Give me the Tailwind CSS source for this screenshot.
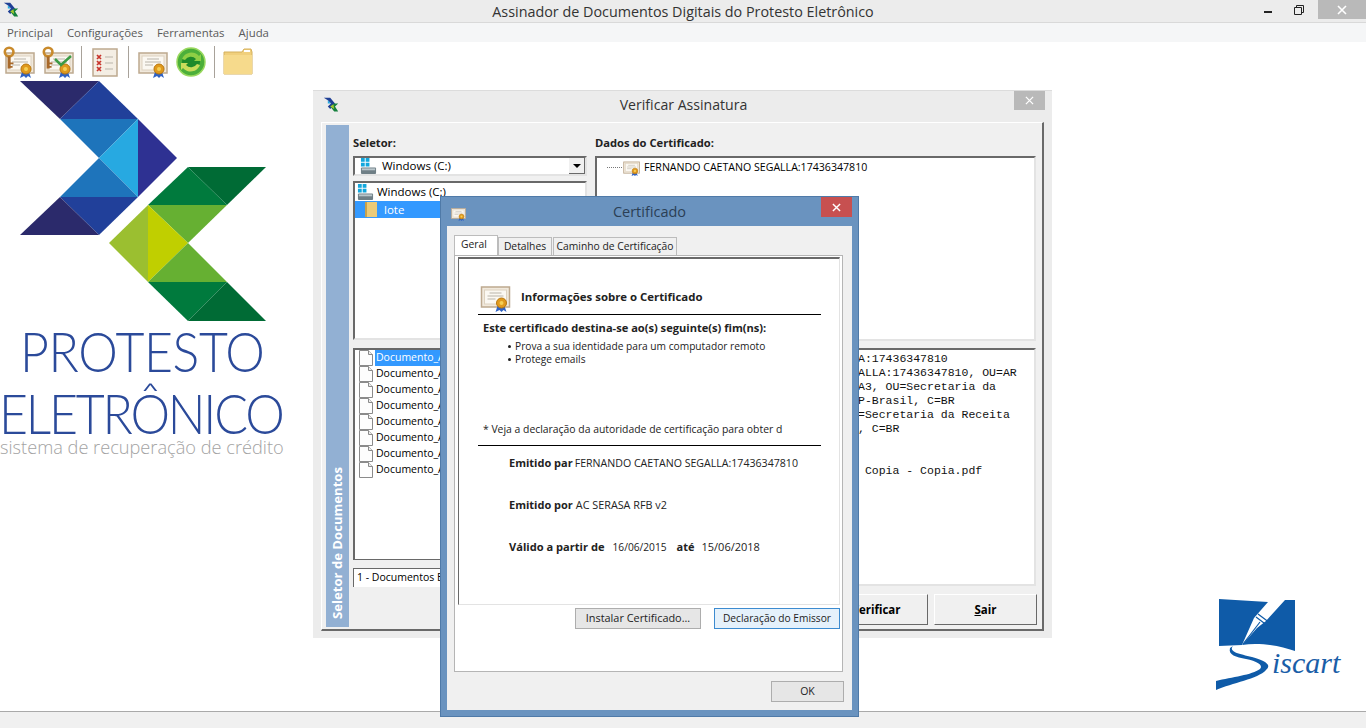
<!DOCTYPE html>
<html lang="pt-BR">
  <head>
    <meta charset="UTF-8" />
    <title>Assinador de Documentos Digitais do Protesto Eletrônico</title>
    <script src="https://cdn.jsdelivr.net/npm/@tailwindcss/browser@4"></script>
  </head>
  <body class="bg-white overflow-hidden font-['Open_Sans','Noto_Sans',sans-serif]">
    <svg class="hidden">
      <symbol id="mark" viewBox="0 0 20 20">
        <polygon points="1,1 9,1 15,8 9,15 6,12 10,8 6,4" fill="#1f3f95" />
        <polygon points="6,4 10,8 6,8" fill="#27a9e1" />
        <polygon points="9,12 14,8 19,8 15,12 19,18 14,18" fill="#15803d" />
        <polygon points="9,12 13,9 14,15" fill="#a3c52f" />
      </symbol>
      <symbol id="cert" viewBox="0 0 32 32">
        <rect x="3" y="7" width="28" height="20" fill="#f1e9dc" stroke="#bda98f" stroke-width="1.5" />
        <rect x="6" y="10" width="22" height="14" fill="#fbf8f2" stroke="#ddd2c0" />
        <path d="M11 13h12M9 16h16M9 19h8" stroke="#b9b4aa" />
        <path d="M19 26l-2 6 4-2 2 2 2-2 3 2-2-6z" fill="#2f62c4" />
        <circle cx="23" cy="23" r="5" fill="#e09a1e" stroke="#b9770f" />
        <circle cx="23" cy="23" r="2" fill="#f6cf55" />
      </symbol>
      <symbol id="key" viewBox="0 0 16 30">
        <circle cx="7" cy="7" r="5" fill="none" stroke="#c98a2b" stroke-width="3" />
        <path d="M7 12v14" stroke="#a8692a" stroke-width="3.5" />
        <path d="M8 20h4M8 24h3" stroke="#a8692a" stroke-width="2" />
      </symbol>
      <symbol id="drive" viewBox="0 0 18 18">
        <rect x="1" y="0" width="4" height="4" fill="#12a7dd" />
        <rect x="6" y="0" width="4" height="4" fill="#12a7dd" />
        <rect x="1" y="5" width="4" height="4" fill="#12a7dd" />
        <rect x="6" y="5" width="4" height="4" fill="#12a7dd" />
        <rect x="1" y="10" width="16" height="7" rx="1" fill="#6f7f86" />
        <rect x="2" y="11" width="14" height="2" fill="#b9c6cb" />
      </symbol>
      <symbol id="doc" viewBox="0 0 14 16">
        <path d="M.5.5h9l4 4v11H.5z" fill="#fdfdfd" stroke="#8a8a8a" />
        <path d="M9.5.5v4h4" fill="#ececec" stroke="#8a8a8a" />
      </symbol>
    </svg>

    <div class="relative w-[1366px] h-[728px] flex flex-col">
      <header class="h-[23px] shrink-0 bg-[#ececec] border-b border-[#d9d9d9] flex items-center relative">
        <svg class="absolute left-[3px] top-[2px] w-[16px] h-[16px]"><use href="#mark" /></svg>
        <h1 class="flex-1 text-center text-[14.35px] text-[#333] leading-[23px]">Assinador de Documentos Digitais do Protesto Eletrônico</h1>
        <div class="absolute right-0 top-0 flex items-center h-[19px]">
          <svg class="w-[10px] h-[10px] mr-[21px]" viewBox="0 0 10 10"><path d="M1 7h8" stroke="#222" stroke-width="2" /></svg>
          <svg class="w-[10px] h-[10px] mr-[14px]" viewBox="0 0 10 10"><path d="M.5 2.5h7v7h-7zM2.5 2.5v-2h7v7h-2" fill="none" stroke="#222" /></svg>
          <div class="w-[48px] h-[19px] bg-[#b9b9b9] flex items-center justify-center">
            <svg class="w-[10px] h-[10px]" viewBox="0 0 10 10"><path d="M1 1l8 8M9 1l-8 8" stroke="#fff" stroke-width="1.6" /></svg>
          </div>
        </div>
      </header>

      <nav class="h-[19px] shrink-0 bg-[#f5f6f7] flex items-center gap-[14px] pl-[7px] text-[11.4px] text-[#5a5a5a]">
        <span>Principal</span><span>Configurações</span><span>Ferramentas</span><span>Ajuda</span>
      </nav>

      <div class="h-[38px] shrink-0 flex items-center pl-[3px] pt-[2px]">
        <div class="relative w-[32px] h-[32px]"><svg class="w-[32px] h-[32px]"><use href="#cert" /></svg><svg class="absolute left-0 top-0 w-[14px] h-[26px]"><use href="#key" /></svg></div>
        <div class="relative w-[32px] h-[32px] ml-[7px]"><svg class="w-[32px] h-[32px]"><use href="#cert" /></svg><svg class="absolute left-0 top-0 w-[14px] h-[26px]"><use href="#key" /></svg><svg class="absolute left-0 top-0 w-[32px] h-[32px]" viewBox="0 0 32 32"><path d="M13 13l6 6 10-9" fill="none" stroke="#3c9b45" stroke-width="2.5" /></svg></div>
        <div class="w-px h-[32px] bg-[#a8a29a] ml-[7px]"></div>
        <svg class="w-[30px] h-[32px] ml-[8px]" viewBox="0 0 30 32"><rect x="3" y="3" width="24" height="27" fill="#f4eee4" stroke="#bda98f" stroke-width="1.5" /><path d="M7 9l4 4M11 9l-4 4M7 15l4 4M11 15l-4 4M7 21l4 4M11 21l-4 4" stroke="#c8352c" stroke-width="1.7" /><path d="M15 11h8M15 17h8M15 23h8" stroke="#b9b4aa" /></svg>
        <div class="w-px h-[32px] bg-[#a8a29a] ml-[8px]"></div>
        <svg class="w-[32px] h-[32px] ml-[7px]"><use href="#cert" /></svg>
        <svg class="w-[32px] h-[32px] ml-[7px]" viewBox="0 0 32 32"><circle cx="16" cy="16" r="14" fill="#4caf3a" stroke="#9ad85f" stroke-width="1.5" /><circle cx="16" cy="16" r="9" fill="#1f8a2a" /><path d="M7 13a10 10 0 0 1 17-3l2-2v7h-7l2-2a7 7 0 0 0-11 1z" fill="#8fcf45" /><path d="M25 19a10 10 0 0 1-17 3l-2 2v-7h7l-2 2a7 7 0 0 0 11-1z" fill="#c9dc5a" /></svg>
        <div class="w-px h-[32px] bg-[#a8a29a] ml-[7px]"></div>
        <svg class="w-[32px] h-[32px] ml-[7px]" viewBox="0 0 32 32"><path d="M2 6h18l2-3h7l1 3v22H2z" fill="#f0cf7c" stroke="#d4b05c" /><rect x="22" y="4" width="6" height="2" fill="#fff" /><path d="M2 9h28v19H2z" fill="#f6da8c" /></svg>
      </div>

      <main class="flex-1"></main>

      <footer class="h-[17px] shrink-0 bg-[#f0f0f0] border-t border-[#a9a9a9]"></footer>

      <!-- logo protesto -->
      <svg class="absolute left-0 top-[80px] w-[280px] h-[245px]" viewBox="0 80 280 245">
        <polygon points="20,81 99,81 60,119" fill="#2b2a6b" />
        <polygon points="99,81 138,119 60,119" fill="#21409a" />
        <polygon points="60,119 138,119 99,158" fill="#1e74bb" />
        <polygon points="138,119 138,197 99,158" fill="#27a9e1" />
        <polygon points="138,119 177,158 138,197" fill="#2e3192" />
        <polygon points="99,158 138,197 60,197" fill="#1e74bb" />
        <polygon points="60,197 138,197 99,235" fill="#21409a" />
        <polygon points="60,197 99,235 20,235" fill="#2b2a6b" />
        <polygon points="188,167 266,167 227,205" fill="#006b35" />
        <polygon points="188,167 227,205 148,205" fill="#007a3d" />
        <polygon points="148,205 227,205 188,243" fill="#66b032" />
        <polygon points="148,205 188,243 148,282" fill="#c0cf00" />
        <polygon points="148,205 148,282 109,243" fill="#9bbf30" />
        <polygon points="188,243 227,282 148,282" fill="#66b032" />
        <polygon points="148,282 227,282 188,321" fill="#007a3d" />
        <polygon points="227,282 266,321 188,321" fill="#006b35" />
      </svg>
      <div class="absolute left-[20px] top-[331px] text-[50px] leading-[40px] font-['Lato'] font-light text-[#2b4a9a] tracking-[-.4px] scale-y-110 whitespace-nowrap">PROTESTO</div>
      <div class="absolute left-[-1px] top-[393px] text-[50px] leading-[40px] font-['Lato'] font-light text-[#2b4a9a] tracking-[-2.2px] scale-y-110 whitespace-nowrap">ELETRÔNICO</div>
      <div class="absolute left-0 top-[437px] text-[18.2px] leading-[20px] font-light text-[#a3a3a3] whitespace-nowrap">sistema de recuperação de crédito</div>

      <!-- logo siscart -->
      <svg class="absolute left-[1210px] top-[595px] w-[90px] h-[100px]" viewBox="0 0 90 100">
        <path d="M9 4L58 7 44 23 32 50 9 51z" fill="#0f5ba8" />
        <path d="M75 5H85V56C70 51 50 47 32 50L47 33 56 26z" fill="#0f5ba8" />
        <path d="M48 19L60 28M46 22L58 31M33 49L50 27" stroke="#0f5ba8" stroke-width="1.2" fill="none" />
        <path d="M23 51C18 57 30 59 42 62 56 66 62 70 56 75 48 84 22 88 6 95V86C22 82 42 80 50 74 54 70 46 66 36 64 26 62 18 60 20 53z" fill="#0f5ba8" />
      </svg>
      <div class="absolute left-[1272px] top-[645px] text-[30px] leading-[36px] italic font-['Liberation_Serif'] text-[#1a5ea8]">iscart</div>

      <!-- Verificar Assinatura -->
      <section class="absolute left-[313px] top-[90px] w-[739px] h-[548px] bg-[#ececec] border-t border-[#dcdcdc] flex flex-col">
        <div class="h-[31px] shrink-0 flex items-center relative pb-[3px]">
          <svg class="absolute left-[10px] top-[6px] w-[16px] h-[16px]"><use href="#mark" /></svg>
          <div class="flex-1 text-center text-[14.1px] text-[#333] pl-[2px]">Verificar Assinatura</div>
          <div class="absolute right-[7px] top-0 w-[31px] h-[19px] bg-[#b9b9b9] flex items-center justify-center">
            <svg class="w-[9px] h-[9px]" viewBox="0 0 10 10"><path d="M1 1l8 8M9 1l-8 8" stroke="#fff" stroke-width="1.4" /></svg>
          </div>
        </div>
        <div class="mx-[8px] w-[723px] h-[509px] bg-[#f0f0f0] border-r-2 border-b-2 border-[#696969] border-t border-l border-t-[#fff] border-l-[#fff] flex pl-[4px] pt-[2px] gap-[4px] text-[11px]">
          <div class="w-[23px] h-[502px] bg-[#92b0d3] flex items-end justify-center pb-[8px]">
            <span class="[writing-mode:vertical-rl] rotate-180 text-white font-bold text-[13.1px] whitespace-nowrap">Seletor de Documentos</span>
          </div>
          <div class="w-[234px] flex flex-col">
            <div class="h-[31px] pt-[10px] font-bold text-[11.2px] text-[#222] leading-[16px]">Seletor:</div>
            <div class="h-[20px] border-2 border-t-[#696969] border-l-[#696969] border-r-[#e3e3e3] border-b-[#e3e3e3] bg-white flex items-center pl-[5px]">
              <svg class="w-[17px] h-[17px]"><use href="#drive" /></svg>
              <span class="ml-[5px] flex-1 text-[11.5px]">Windows (C:)</span>
              <span class="w-[16px] h-[16px] bg-[#f0f0f0] border-r border-b border-[#696969] flex items-center justify-center"><span class="w-0 h-0 border-x-[4px] border-x-transparent border-t-[4px] border-t-black"></span></span>
            </div>
            <div class="h-[159px] mt-[5px] border-2 border-t-[#696969] border-l-[#696969] border-r-[#e3e3e3] border-b-[#e3e3e3] bg-white">
              <div class="h-[18px] flex items-center pl-[2px] text-[11.5px]"><svg class="w-[17px] h-[17px]"><use href="#drive" /></svg><span class="ml-[3px]">Windows (C:)</span></div>
              <div class="h-[17px] flex items-center pl-[10px] bg-[#3399ff] text-white text-[11.5px]"><span class="w-[12px] h-[15px] bg-[#eccb78] border-l-2 border-[#c7a24e]"></span><span class="ml-[7px]">lote</span></div>
            </div>
            <div class="h-[212px] mt-[8px] border-l-2 border-t-2 border-[#696969] border-b border-r bg-white pl-[4px]">
              <div class="h-[16px] flex items-center text-[10.5px]"><svg class="w-[14px] h-[16px]"><use href="#doc" /></svg><span class="ml-[2px] pl-[1px] bg-[#3399ff] text-white">Documento_A</span></div>
              <div class="h-[16px] flex items-center text-[10.5px]"><svg class="w-[14px] h-[16px]"><use href="#doc" /></svg><span class="ml-[3px]">Documento_A</span></div>
              <div class="h-[16px] flex items-center text-[10.5px]"><svg class="w-[14px] h-[16px]"><use href="#doc" /></svg><span class="ml-[3px]">Documento_A</span></div>
              <div class="h-[16px] flex items-center text-[10.5px]"><svg class="w-[14px] h-[16px]"><use href="#doc" /></svg><span class="ml-[3px]">Documento_A</span></div>
              <div class="h-[16px] flex items-center text-[10.5px]"><svg class="w-[14px] h-[16px]"><use href="#doc" /></svg><span class="ml-[3px]">Documento_A</span></div>
              <div class="h-[16px] flex items-center text-[10.5px]"><svg class="w-[14px] h-[16px]"><use href="#doc" /></svg><span class="ml-[3px]">Documento_A</span></div>
              <div class="h-[16px] flex items-center text-[10.5px]"><svg class="w-[14px] h-[16px]"><use href="#doc" /></svg><span class="ml-[3px]">Documento_A</span></div>
              <div class="h-[16px] flex items-center text-[10.5px]"><svg class="w-[14px] h-[16px]"><use href="#doc" /></svg><span class="ml-[3px]">Documento_A</span></div>
            </div>
            <div class="h-[19px] mt-[8px] border-l border-t border-[#696969] bg-white pl-[3px] text-[10.5px] leading-[17px] whitespace-nowrap">1 - Documentos E</div>
          </div>
          <div class="w-[441px] ml-[4px] flex flex-col">
            <div class="h-[31px] pt-[10px] font-bold text-[11.2px] text-[#222] leading-[16px]">Dados do Certificado:</div>
            <div class="h-[185px] border-2 border-t-[#696969] border-l-[#696969] border-r-[#e3e3e3] border-b-[#e3e3e3] bg-white flex items-start pl-[10px] text-[10.6px]">
              <span class="w-[15px] border-t border-dotted border-[#777] mt-[9px]"></span>
              <svg class="w-[18px] h-[18px]"><use href="#cert" /></svg>
              <span class="ml-[4px] leading-[18px]">FERNANDO CAETANO SEGALLA:17436347810</span>
            </div>
            <div class="h-[238px] mt-[7px] border-2 border-t-[#696969] border-l-[#696969] border-r-[#e3e3e3] border-b-[#e3e3e3] bg-white pl-[261px] pt-[2px] font-['Liberation_Mono'] text-[11.5px] leading-[14px] whitespace-pre text-[#111]">A:17436347810
ALLA:17436347810, OU=AR
A3, OU=Secretaria da
P-Brasil, C=BR
=Secretaria da Receita
, C=BR


 Copia - Copia.pdf</div>
            <div class="mt-[8px] flex justify-end gap-[6px] -mr-[1px]">
              <div class="w-[104px] h-[31px] bg-[#f0f0f0] border border-t-[#fff] border-l-[#fff] border-r-[#696969] border-b-[#696969] flex items-center justify-center font-bold text-[11.5px] pt-[1px]">Verificar</div>
              <div class="w-[103px] h-[31px] bg-[#f0f0f0] border border-t-[#fff] border-l-[#fff] border-r-[#696969] border-b-[#696969] flex items-center justify-center font-bold text-[11.5px] pt-[1px]"><span><u>S</u>air</span></div>
            </div>
          </div>
        </div>
      </section>

      <!-- Certificado -->
      <section class="absolute left-[440px] top-[196px] w-[419px] h-[521px] bg-[#6a93bf] border border-[#4f7aa8] flex flex-col">
        <div class="h-[29px] shrink-0 relative flex items-center justify-center">
          <svg class="absolute left-[8px] top-[8px] w-[18px] h-[16px]"><use href="#cert" /></svg>
          <span class="text-[14.5px] text-[#2b3f55]">Certificado</span>
          <div class="absolute right-[6px] top-0 w-[31px] h-[20px] bg-[#c75050] flex items-center justify-center">
            <svg class="w-[9px] h-[9px]" viewBox="0 0 10 10"><path d="M1 1l8 8M9 1l-8 8" stroke="#fff" stroke-width="1.6" /></svg>
          </div>
        </div>
        <div class="mx-[6px] w-[405px] h-[484px] bg-[#f0f0f0] pt-[9px] pl-[7px] flex flex-col text-[#222]">
          <div class="flex items-end h-[20px] text-[10.3px] leading-[17px]">
            <div class="w-[44px] h-[20px] bg-white border border-b-0 border-[#bcbcbc] text-center z-10 pr-[4px]">Geral</div>
            <div class="w-[54px] h-[18px] bg-[#f0f0f0] border border-b-0 border-[#bcbcbc] text-center">Detalhes</div>
            <div class="w-[124px] h-[18px] ml-[1px] bg-[#f0f0f0] border border-b-0 border-[#bcbcbc] text-center">Caminho de Certificação</div>
          </div>
          <div class="w-[389px] h-[417px] bg-white border border-[#b5b5b5] pt-[1px] pl-[3px] flex flex-col">
            <div class="w-[382px] h-[348px] border-l border-t-2 border-[#696969] border-r border-r-[#e3e3e3] border-b border-b-[#e3e3e3] flex flex-col pl-[19px]">
              <div class="h-[36px] mt-[19px] flex items-center">
                <svg class="w-[33px] h-[32px]"><use href="#cert" /></svg>
                <span class="ml-[10px] font-bold text-[11.4px] text-[#222] pt-[1px]">Informações sobre o Certificado</span>
              </div>
              <div class="w-[343px] h-px bg-black"></div>
              <div class="ml-[5px] mt-[5px] font-bold text-[11.1px] leading-[16px] whitespace-nowrap">Este certificado destina-se ao(s) seguinte(s) fim(ns):</div>
              <ul class="ml-[31px] mt-[4px] text-[10.2px] leading-[13px] whitespace-nowrap">
                <li class="flex items-center"><span class="w-[3px] h-[3px] rounded-full bg-[#222] mr-[4px] -ml-[1px]"></span>Prova a sua identidade para um computador remoto</li>
                <li class="flex items-center"><span class="w-[3px] h-[3px] rounded-full bg-[#222] mr-[4px] -ml-[1px]"></span>Protege emails</li>
              </ul>
              <div class="ml-[5px] mt-[56px] text-[10.4px] leading-[14px] whitespace-nowrap">* Veja a declaração da autoridade de certificação para obter d</div>
              <div class="w-[343px] h-px bg-black mt-[9px]"></div>
              <div class="ml-[31px] mt-[10px] text-[10.6px] leading-[14px] whitespace-nowrap flex"><b class="text-[11px]">Emitido par</b><span class="ml-[2px]">FERNANDO CAETANO SEGALLA:17436347810</span></div>
              <div class="ml-[31px] mt-[28px] text-[10.8px] leading-[14px] whitespace-nowrap flex"><b class="text-[11px]">Emitido por</b><span class="ml-[3px]">AC SERASA RFB v2</span></div>
              <div class="ml-[31px] mt-[28px] text-[10.2px] leading-[14px] whitespace-nowrap flex"><b class="text-[11.1px]">Válido a partir de</b><span class="ml-[8px]">16/06/2015</span><b class="ml-[10px] text-[11px]">até</b><span class="ml-[7px] text-[11px]">15/06/2018</span></div>
            </div>
            <div class="flex gap-[13px] justify-end w-[382px] mt-[3px]">
              <div class="w-[126px] h-[21px] bg-[#e6e6e6] border border-[#adadad] text-[10.9px] flex items-center justify-center">Instalar Certificado...</div>
              <div class="w-[126px] h-[21px] bg-[#e5f1fb] border border-[#3c8bd0] text-[10.2px] flex items-center justify-center">Declaração do Emissor</div>
            </div>
          </div>
          <div class="flex justify-end w-[390px] mt-[9px]">
            <div class="w-[73px] h-[21px] bg-[#e6e6e6] border border-[#adadad] text-[10.5px] flex items-center justify-center">OK</div>
          </div>
        </div>
      </section>
    </div>
  </body>
</html>
